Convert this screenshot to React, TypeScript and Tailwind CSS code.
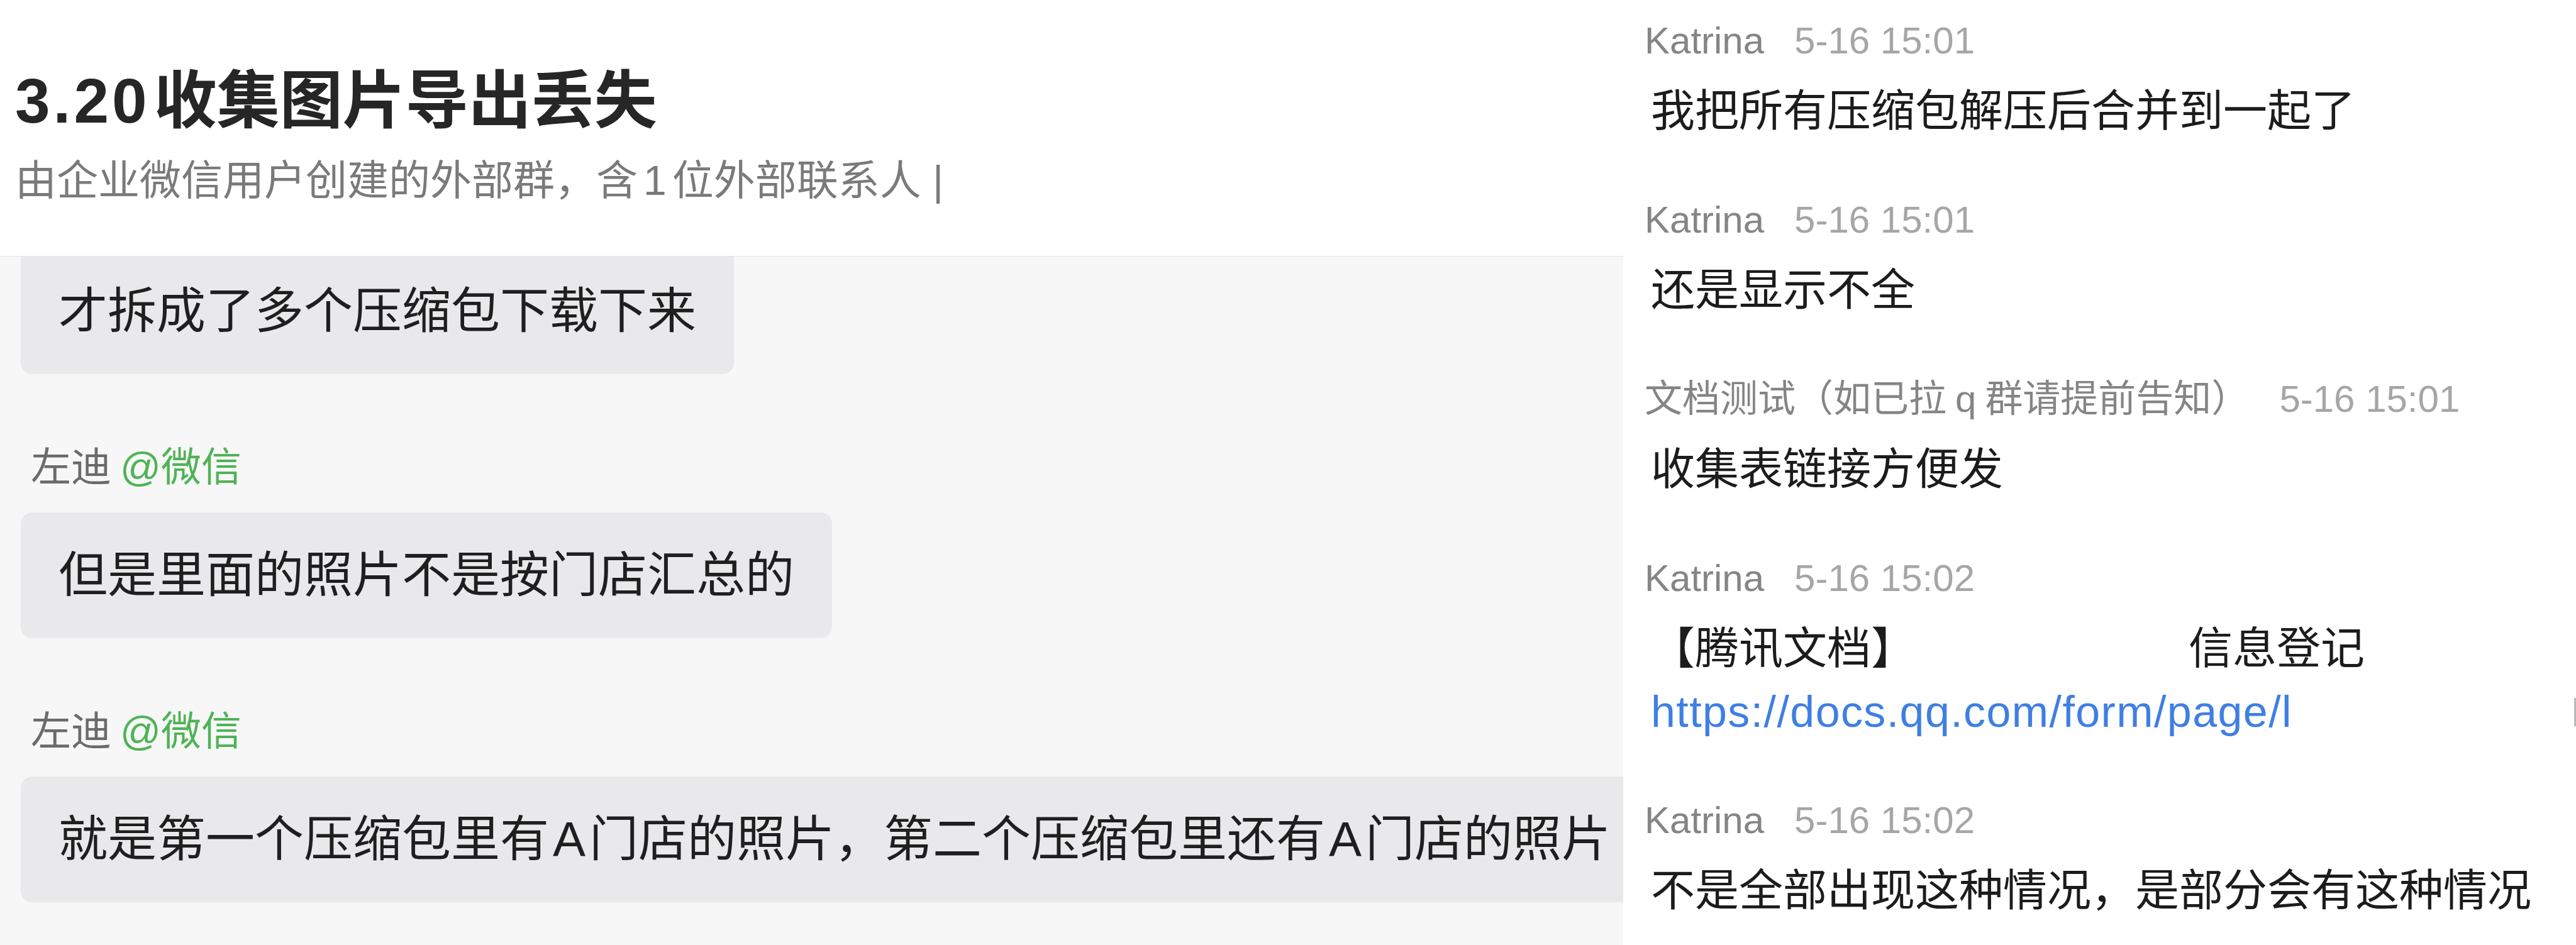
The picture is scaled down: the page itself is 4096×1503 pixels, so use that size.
import { ReactNode } from "react";

const bubbles: { sender?: boolean; text: ReactNode }[] = [
  { text: "才拆成了多个压缩包下载下来" },
  { sender: true, text: "但是里面的照片不是按门店汇总的" },
  {
    sender: true,
    text: (
      <>
        就是第一个压缩包里有<span className="mx-[6px]">A</span>门店的照片，第二个压缩包里还有
        <span className="mx-[6px]">A</span>门店的照片
      </>
    ),
  },
];

const messages: { name: ReactNode; time: string; body: ReactNode }[] = [
  { name: "Katrina", time: "5-16 15:01", body: "我把所有压缩包解压后合并到一起了" },
  { name: "Katrina", time: "5-16 15:01", body: "还是显示不全" },
  {
    name: (
      <>
        文档测试（如已拉<span className="mx-[14px]">q</span>群请提前告知）
      </>
    ),
    time: "5-16 15:01",
    body: "收集表链接方便发",
  },
  {
    name: "Katrina",
    time: "5-16 15:02",
    body: (
      <>
        <div>
          【腾讯文档】<span className="inline-block w-[435px]" />信息登记
        </div>
        <div className="flex items-center justify-between">
          <span className="tracking-[1.4px] text-[#3f7fe3]">https://docs.qq.com/form/page/l</span>
          <span className="h-[45px] w-[3px] bg-[#b8b8b8]" />
        </div>
      </>
    ),
  },
  { name: "Katrina", time: "5-16 15:02", body: "不是全部出现这种情况，是部分会有这种情况" },
];

const SenderName = () => (
  <div className="ml-[49px] mt-[116px] whitespace-nowrap text-[64px] leading-[64px] text-[#6b6b6b]">
    左迪<span className="ml-[14px] text-[#4fb356]">@微信</span>
  </div>
);

const GroupChat = () => (
  <div className="flex w-[2581px] shrink-0 flex-col overflow-hidden bg-[#f7f7f7]">
    <header className="relative z-10 shrink-0 border-b border-[#e6e6e6] bg-white pb-[80px] pl-[24px] pt-[100px]">
      <h1 className="whitespace-nowrap text-[100px] font-semibold leading-[120px] text-[#262626]">
        <span className="mr-[6px] tracking-[5px]">3.20</span>收集图片导出丢失
      </h1>
      <p className="mt-[27px] whitespace-nowrap text-[66px] leading-[80px] text-[#7a7a7a]">
        由企业微信用户创建的外部群，含<span className="mx-[9px]">1</span>位外部联系人 |
      </p>
    </header>

    <div className="flex flex-1 flex-col items-start overflow-hidden">
      {bubbles.map((b, i) => (
        <div key={i} className="contents">
          {b.sender && <SenderName />}
          <div
            className={`ml-[33px] flex h-[200px] shrink-0 items-center whitespace-nowrap rounded-[18px] bg-[#e9e9eb] px-[60px] text-[78px] leading-[100px] text-[#1f1f1f] ${
              i === 0 ? "-mt-[13px]" : "mt-[40px]"
            }`}
          >
            {b.text}
          </div>
        </div>
      ))}
    </div>
  </div>
);

const DocPanel = () => (
  <div className="w-[1515px] shrink-0 bg-white pl-[34px] pt-[35px]">
    {messages.map((m, i) => (
      <div key={i} className="mb-[93px]">
        <div className="flex items-baseline whitespace-nowrap text-[60px] leading-[60px]">
          <span className="text-[#858585]">{m.name}</span>
          <span className="ml-[48px] text-[#a6a6a6]">{m.time}</span>
        </div>
        <div className="ml-[10px] mt-[32px] whitespace-nowrap text-[70px] leading-[100px] text-[#1c1c1c]">
          {m.body}
        </div>
      </div>
    ))}
  </div>
);

export default function App() {
  return (
    <div className="flex h-[1503px] w-[4096px] overflow-hidden font-['Liberation_Sans','Noto_Sans_CJK_SC',sans-serif]">
      <GroupChat />
      <DocPanel />
    </div>
  );
}
